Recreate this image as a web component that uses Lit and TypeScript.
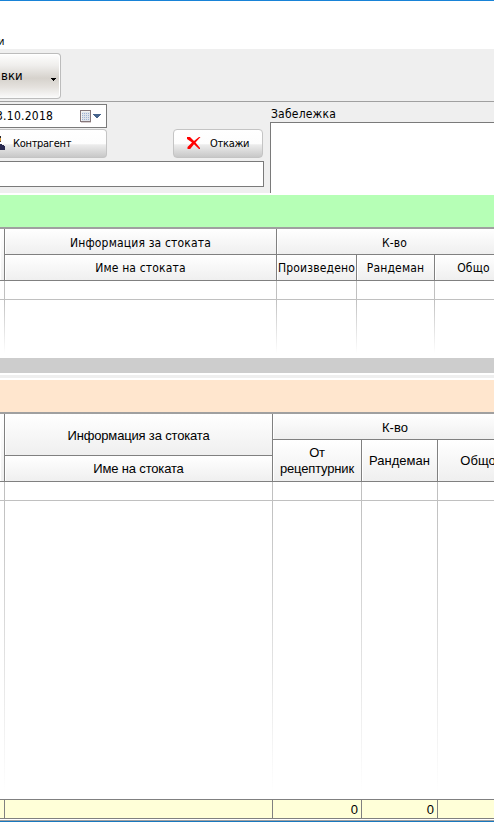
import { LitElement, html, css, svg } from "lit";
import { customElement } from "lit/decorators.js";

@customElement("calendar-icon")
class CalendarIcon extends LitElement {
  static styles = css`:host { display: block; width: 12px; height: 13px; } svg { display: block; }`;
  render() {
    const dots = [0, 1, 2, 3].flatMap((r) =>
      [0, 1, 2, 3].map((c) => svg`<rect x=${2 + c * 2} y=${3 + r * 2} width="1" height="1" fill="#9fb3d4" />`));
    return html`<svg width="12" height="13" shape-rendering="crispEdges">
      <rect x="1" y="12" width="10" height="1" fill="#d8cfcf" />
      <rect x="0.5" y="0.5" width="10" height="11" fill="#f3f3f3" stroke="#84777a" />
      <rect x="2" y="2" width="8" height="9" fill="#dfe3ea" />
      ${dots}
      <path d="M8 12 L11 9 V12Z" fill="#84777a" />
    </svg>`;
  }
}

@customElement("app-root")
class AppRoot extends LitElement {
  static styles = css`
    :host { display: block; width: 494px; height: 822px; overflow: hidden; background: #fff; color: #000;
      font-family: "DejaVu Sans Condensed", "DejaVu Sans", sans-serif; font-size: 12px; }
    * { box-sizing: border-box; }
    .window { display: flex; flex-direction: column; width: 494px; height: 822px; overflow: hidden; border-top: 1px solid #1883d7; }
    .menu { height: 48px; padding-top: 33px; font: 11px/15px "DejaVu Sans Condensed", sans-serif; display: flex; }
    .menu span { margin-left: -2px; }
    .toolbar { height: 53px; background: #efefef; padding-top: 4px; border-bottom: 1px solid #a0a0a0; }
    .tool { width: 61px; height: 46px; display: flex; align-items: center; justify-content: space-between; padding: 0 4px 0 1px;
      border: 1px solid #bcbcbc; border-left: 0; border-radius: 0 4px 4px 0; font-size: 13px; box-shadow: inset -1px 1px #fff;
      background: linear-gradient(#fefefe, #f0efed 25%, #d6d2cc 55%, #e4e1dd 75%, #fbfbfb); }
    .tool span { margin-top: -1px; }
    .tool svg { margin-top: 6px; }
    .form { height: 91px; background: #efefef; display: flex; }
    .fields { width: 270px; padding-top: 2px; }
    .date { width: 107px; height: 24px; background: #fff; border: 1px solid #7a7a7a; border-left: 0; display: flex; align-items: center; }
    .date span { width: 80px; margin-left: -4px; letter-spacing: 0.25px; white-space: nowrap; }
    .date calendar-icon { margin-left: 4px; }
    .date svg { margin-left: 1px; }
    .buttons { display: flex; justify-content: space-between; width: 263px; margin-top: 1px; }
    .btn { height: 29px; display: flex; align-items: center; border: 1px solid #c4c4c4; border-radius: 4px; font-size: 11px;
      letter-spacing: -0.3px; background: linear-gradient(#fff 0, #fdfdfd 50%, #ececec 55%, #c8c8c8); }
    .party { width: 107px; border-left: 0; border-radius: 0 4px 4px 0; }
    .party span { margin-left: 8px; }
    .cancel { width: 90px; }
    .cancel svg { margin: -2px 0 0 13px; }
    .cancel span { margin-left: 9px; }
    .input { width: 264px; height: 26px; margin-top: 3px; background: #fff; border: 1px solid #7a7a7a; border-left: 0; }
    .memo { flex: 1; display: flex; flex-direction: column; }
    .memo label { height: 20px; line-height: 24px; padding-left: 1px; letter-spacing: 0.2px; }
    .memo div { flex: 1; background: #fff; border: solid #7a7a7a; border-width: 1px 0 0 1px; }
    .band { height: 34px; border-bottom: 2px solid #a0a0a0; flex: none; }
    .green { margin-top: 2px; background: #b6ffb6; }
    .peach { background: #ffe6ce; margin-top: 2px; }
    .split { height: 15px; background: #cdcdcd; }
    .strip { height: 3px; background: #efefef; margin-top: 2px; }
    .head { display: grid; white-space: nowrap; }
    .cell { display: flex; align-items: center; justify-content: center; text-align: center;
      border: solid #808080; border-width: 0 1px 1px 0; background: linear-gradient(#fff, #efefef); box-shadow: inset 1px 0 #fff; }
    .side { grid-row: 1 / -1; }
    .wide { grid-column: span 3; }
    .one { grid-template-columns: 5px 272px 80px 78px 81px; grid-template-rows: 26px 26px; }
    .two { grid-template-columns: 5px 268px 89px 76px 81px; grid-template-rows: 26px 16px 26px;
      font-family: "Liberation Sans", Arial, sans-serif; font-size: 13px; line-height: 16px; }
    .head.one { letter-spacing: 0.17px; }
    .one .wide { padding: 2px 3px 0 0; }
    .one .info { padding-top: 2px; grid-row: auto; }
    .one .last { padding-right: 3px; }
    .two .wide { padding: 2px 1px 0 0; }
    .two .info, .two .name, .two .tight { letter-spacing: -0.17px; }
    .two .info { padding-top: 2px; }
    .info { grid-row: span 2; }
    .tall { grid-row: 2 / 4; }
    .name { grid-column: 2; grid-row: 3; }
    .body { display: grid; }
    .body i { border-right: 1px solid #c0c0c0; border-bottom: 1px solid #c0c0c0; }
    .body b { background: linear-gradient(#c0c0c0, #fff) right / 1px 100% no-repeat; }
    .body.one { height: 72px; margin-bottom: 5px; grid-template-rows: 19px 1fr; }
    .body.two { height: 311px; margin-bottom: 6px; grid-template-rows: 19px 1fr; }
    .foot { display: grid; height: 20px; border: solid #808080; border-width: 1px 0; background: #ffffd8; }
    .foot.two { grid-template-rows: 18px; }
    .foot span { border-right: 1px solid #808080; text-align: right; padding-right: 3px; line-height: 19px; height: 18px; }
    .edge { height: 2px; margin-top: 1px; background: #a0a0a0; border-bottom: 1px solid #1878be; }
  `;

  private body(kind: string) {
    return html`<div class="body ${kind}">
      ${[0, 1, 2, 3, 4].map(() => html`<i></i>`)}${[0, 1, 2, 3, 4].map(() => html`<b></b>`)}
    </div>`;
  }

  render() {
    return html`<div class="window">
      <div class="menu"><span>и</span></div>
      <div class="toolbar"><div class="tool"><span>вки</span>
        <svg width="5" height="3" shape-rendering="crispEdges"><path d="M0 0H5V1H4V2H3V3H2V2H1V1H0Z" /></svg></div></div>
      <div class="form">
        <div class="fields">
          <div class="date"><span>3.10.2018</span><calendar-icon></calendar-icon>
            <svg width="8" height="4" shape-rendering="crispEdges"><path d="M0 0H8V1H7V2H6V3H5V4H3V3H2V2H1V1H0Z" fill="#46648c" /></svg></div>
          <div class="buttons">
            <div class="btn party">
              <svg width="5" height="15" shape-rendering="crispEdges"><path d="M0 0H1V2H0Z" fill="#29262a" /><path d="M0 2H1V5H0Z" fill="#d99a3d" /><path d="M0 5H1V6H0Z" fill="#5a3a2a" /><path d="M0 8H2V9H4V10H5V14H0Z" fill="#29294f" /></svg>
              <span>Контрагент</span></div>
            <div class="btn cancel">
              <svg width="14" height="14"><path d="M0.5 1.5H2.5L7 6L12.5 1" fill="none" stroke="none" /><path d="M0 1H3L7 5L12 1H13.5L8.5 6.5L13 12V13H12L7 8.3L3.2 13H0.5V11L5 6.5L0 3Z" fill="#ff0000" /></svg>
              <span>Откажи</span></div>
          </div>
          <div class="input"></div>
        </div>
        <div class="memo"><label>Забележка</label><div></div></div>
      </div>
      <div class="band green"></div>
      <div class="head one">
        <div class="cell side"></div><div class="cell info"><span>Информация за стоката</span></div><div class="cell wide"><span>К-во</span></div>
        <div class="cell"><span>Име на стоката</span></div><div class="cell"><span>Произведено</span></div>
        <div class="cell"><span>Рандеман</span></div><div class="cell last"><span>Общо</span></div>
      </div>
      ${this.body("one")}
      <div class="split"></div>
      <div class="strip"></div>
      <div class="band peach"></div>
      <div class="head two">
        <div class="cell side"></div><div class="cell info"><span>Информация за стоката</span></div><div class="cell wide"><span>К-во</span></div>
        <div class="cell tall tight"><span>От<br>рецептурник</span></div><div class="cell tall"><span>Рандеман</span></div>
        <div class="cell tall"><span>Общо</span></div><div class="cell name"><span>Име на стоката</span></div>
      </div>
      ${this.body("two")}
      <div class="foot two"><span></span><span></span><span>0</span><span>0</span><span></span></div>
      <div class="edge"></div>
    </div>`;
  }
}
